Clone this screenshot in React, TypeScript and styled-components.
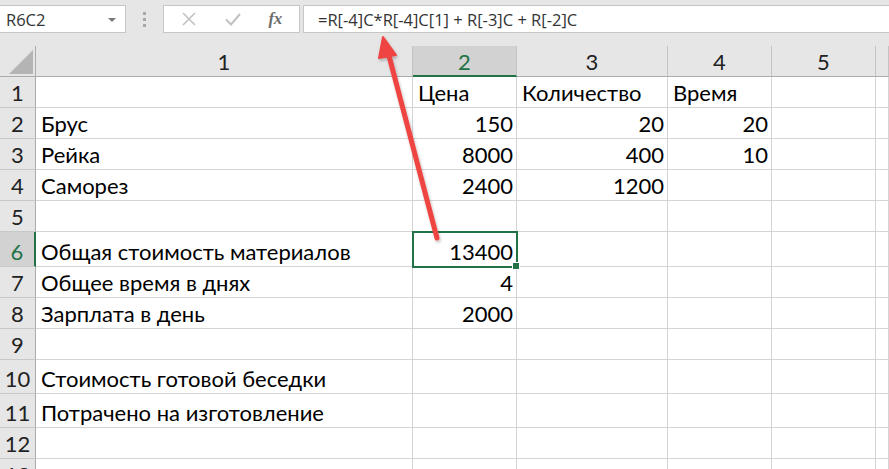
import React from "react";
import styled, { createGlobalStyle, css } from "styled-components";

const Global = createGlobalStyle`
  html, body { margin: 0; padding: 0; background: #ffffff; overflow: hidden; }
  #root { width: 889px; height: 469px; overflow: hidden; position: relative; }
`;

const Page = styled.div`
  width: 889px;
  height: 469px;
  display: flex;
  flex-direction: column;
  position: relative;
  background: #ffffff;
`;

const Toolbar = styled.div`
  height: 46px;
  flex: none;
  background: #e6e6e6;
  display: flex;
  align-items: flex-start;
  padding-top: 5px;
  box-sizing: border-box;
`;

const NameBox = styled.div`
  width: 126px;
  height: 28px;
  box-sizing: border-box;
  background: #ffffff;
  border: 1px solid #c6c6c6;
  border-left: none;
  display: flex;
  align-items: center;
  padding-left: 6px;
  font-family: "Open Sans", sans-serif;
  font-size: 16.5px;
  color: #333333;
  position: relative;
`;

const DropTri = styled.div`
  position: absolute;
  right: 9px;
  top: 12px;
  width: 0;
  height: 0;
  border-left: 4px solid transparent;
  border-right: 4px solid transparent;
  border-top: 4px solid #7a7a7a;
`;

const Grip = styled.div`
  width: 37px;
  height: 28px;
  display: flex;
  flex-direction: column;
  align-items: center;
  justify-content: center;
  gap: 3px;
`;

const GripDot = styled.span`
  width: 3px;
  height: 3px;
  background: #a8a8a8;
`;

const FxGroup = styled.div`
  width: 137px;
  height: 28px;
  box-sizing: border-box;
  background: #ffffff;
  border: 1px solid #c6c6c6;
  display: flex;
  align-items: center;
  justify-content: space-around;
  padding: 0 4px;
`;

const Fx = styled.span`
  font-family: "Liberation Serif", serif;
  font-style: italic;
  font-weight: bold;
  font-size: 17px;
  color: #6e6e6e;
  letter-spacing: -0.5px;
`;

const FormulaBox = styled.div`
  flex: 1;
  margin-left: 3px;
  height: 28px;
  box-sizing: border-box;
  background: #ffffff;
  border: 1px solid #c6c6c6;
  border-right: none;
  display: flex;
  align-items: center;
  padding-left: 14px;
  font-family: "Open Sans", sans-serif;
  font-size: 16.5px;
  color: #333333;
  white-space: nowrap;
`;

const Sheet = styled.div`
  display: grid;
  grid-template-columns: 36px 377px 104px 151px 104px 104px 1fr;
  grid-template-rows: 31px 31px 31px 31px 31px 31px 35px 31px 31px 31px 34px 34px 31px 31px;
  font-family: "Lato", "Open Sans", sans-serif;
  font-size: 22px;
  color: #000000;
`;

const Corner = styled.div`
  background: #e6e6e6;
  border-right: 1px solid #ababab;
  border-bottom: 1px solid #ababab;
  position: relative;
`;

const CornerTri = styled.div`
  position: absolute;
  right: 2px;
  bottom: 2px;
  width: 0;
  height: 0;
  border-left: 24px solid transparent;
  border-bottom: 24px solid #b4b4b4;
`;

const ColHead = styled.div<{ $active?: boolean }>`
  background: #e6e6e6;
  border-right: 1px solid #c3c3c3;
  border-bottom: 1px solid #ababab;
  display: flex;
  align-items: flex-end;
  justify-content: center;
  padding-bottom: 1px;
  box-sizing: border-box;
  color: #222222;
  ${(p) =>
    p.$active &&
    css`
      background: #d2d2d2;
      color: #217346;
      border-bottom: 2px solid #217346;
      padding-bottom: 0;
    `}
`;

const RowHead = styled.div<{ $active?: boolean }>`
  background: #e6e6e6;
  border-right: 1px solid #ababab;
  border-bottom: 1px solid #c8c8c8;
  display: flex;
  align-items: flex-end;
  justify-content: center;
  padding-bottom: 1px;
  box-sizing: border-box;
  color: #222222;
  ${(p) =>
    p.$active &&
    css`
      background: #d2d2d2;
      color: #217346;
      border-right: 2px solid #217346;
    `}
`;

const Cell = styled.div<{ $num?: boolean; $selected?: boolean }>`
  border-right: 1px solid #d4d4d4;
  border-bottom: 1px solid #d4d4d4;
  box-sizing: border-box;
  display: flex;
  align-items: flex-end;
  justify-content: ${(p) => (p.$num ? "flex-end" : "flex-start")};
  padding: 0 3px 1px 5px;
  white-space: nowrap;
  overflow: visible;
  position: relative;
  ${(p) =>
    p.$selected &&
    css`
      outline: 2px solid #217346;
      outline-offset: -1px;
      z-index: 2;
    `}
`;

const Handle = styled.span`
  position: absolute;
  right: -4px;
  bottom: -4px;
  width: 6px;
  height: 6px;
  background: #217346;
  border: 1px solid #ffffff;
`;

const ArrowLayer = styled.svg`
  position: absolute;
  left: 0;
  top: 0;
  pointer-events: none;
  z-index: 5;
`;

type CellDef = { v?: string; num?: boolean };

const E: CellDef = {};

const rows: { h: string; cells: CellDef[] }[] = [
  { h: "1", cells: [E, { v: "Цена" }, { v: "Количество" }, { v: "Время" }, E, E] },
  { h: "2", cells: [{ v: "Брус" }, { v: "150", num: true }, { v: "20", num: true }, { v: "20", num: true }, E, E] },
  { h: "3", cells: [{ v: "Рейка" }, { v: "8000", num: true }, { v: "400", num: true }, { v: "10", num: true }, E, E] },
  { h: "4", cells: [{ v: "Саморез" }, { v: "2400", num: true }, { v: "1200", num: true }, E, E, E] },
  { h: "5", cells: [E, E, E, E, E, E] },
  { h: "6", cells: [{ v: "Общая стоимость материалов" }, { v: "13400", num: true }, E, E, E, E] },
  { h: "7", cells: [{ v: "Общее время в днях" }, { v: "4", num: true }, E, E, E, E] },
  { h: "8", cells: [{ v: "Зарплата в день" }, { v: "2000", num: true }, E, E, E, E] },
  { h: "9", cells: [E, E, E, E, E, E] },
  { h: "10", cells: [{ v: "Стоимость готовой беседки" }, E, E, E, E, E] },
  { h: "11", cells: [{ v: "Потрачено на изготовление" }, E, E, E, E, E] },
  { h: "12", cells: [E, E, E, E, E, E] },
  { h: "13", cells: [E, E, E, E, E, E] },
];

export default function App() {
  return (
    <>
      <Global />
      <Page>
        <Toolbar>
          <NameBox>
            R6C2
            <DropTri />
          </NameBox>
          <Grip>
            <GripDot />
            <GripDot />
            <GripDot />
          </Grip>
          <FxGroup>
            <svg width="16" height="16" viewBox="0 0 16 16">
              <path d="M2 2 L14 14 M14 2 L2 14" stroke="#c2c2c2" strokeWidth="1.6" fill="none" />
            </svg>
            <svg width="18" height="16" viewBox="0 0 18 16">
              <path d="M2 8.5 L7 13.5 L16 3" stroke="#c2c2c2" strokeWidth="2" fill="none" />
            </svg>
            <Fx>fx</Fx>
          </FxGroup>
          <FormulaBox>=R[-4]C*R[-4]C[1] + R[-3]C + R[-2]C</FormulaBox>
        </Toolbar>
        <Sheet>
          <Corner>
            <CornerTri />
          </Corner>
          <ColHead>1</ColHead>
          <ColHead $active>2</ColHead>
          <ColHead>3</ColHead>
          <ColHead>4</ColHead>
          <ColHead>5</ColHead>
          <ColHead />
          {rows.map((r) => (
            <React.Fragment key={r.h}>
              <RowHead $active={r.h === "6"}>{r.h}</RowHead>
              {r.cells.map((c, i) => (
                <Cell key={i} $num={c.num} $selected={r.h === "6" && i === 1}>
                  {c.v}
                  {r.h === "6" && i === 1 && <Handle />}
                </Cell>
              ))}
            </React.Fragment>
          ))}
        </Sheet>
        <ArrowLayer width="889" height="469" viewBox="0 0 889 469">
          <defs>
            <filter id="sh" x="-20%" y="-20%" width="140%" height="140%">
              <feDropShadow dx="1" dy="2" stdDeviation="1.5" floodColor="#000" floodOpacity="0.25" />
            </filter>
          </defs>
          <g filter="url(#sh)">
            <line x1="437" y1="238" x2="388" y2="52" stroke="#ef4543" strokeWidth="5" strokeLinecap="round" />
            <polygon points="383,37 396,55 379,58" fill="#ef4543" stroke="#ef4543" strokeWidth="2" strokeLinejoin="round" />
          </g>
        </ArrowLayer>
      </Page>
    </>
  );
}
